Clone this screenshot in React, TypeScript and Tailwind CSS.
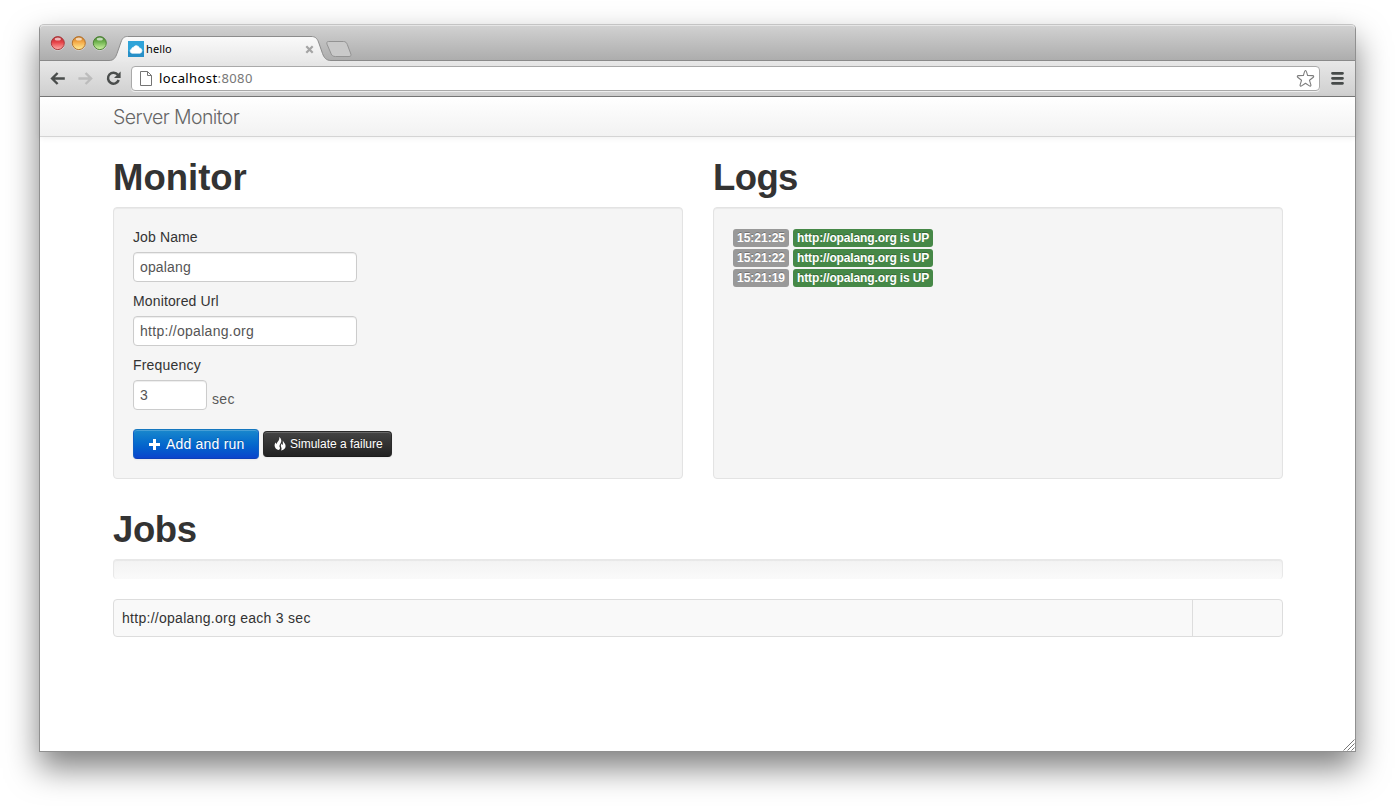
import React from "react";

function Light({ id, edge, top, mid, glow }: { id: string; edge: string; top: string; mid: string; glow: string }) {
  return (
    <svg width="15" height="16" viewBox="0 0 15 16" className="block">
      <defs>
        <linearGradient id={id} x1="0" y1="0" x2="0" y2="1">
          <stop offset="0" stopColor={top} />
          <stop offset="0.45" stopColor={mid} />
          <stop offset="1" stopColor={glow} />
        </linearGradient>
      </defs>
      <circle cx="7.8" cy="8.9" r="6.9" fill="#fff" opacity="0.45" />
      <circle cx="7.8" cy="8.1" r="6.5" fill={`url(#${id})`} stroke={edge} strokeWidth="1" />
      <ellipse cx="7.8" cy="4" rx="3.1" ry="1.6" fill="#fff" opacity="0.65" />
    </svg>
  );
}

function TabStrip() {
  return (
    <div className="flex h-[36px] items-start rounded-t-[4px] border-b border-[#8a8a8a] bg-linear-to-b from-[#d2d2d2] to-[#adadad] shadow-[inset_0_1px_0_#e6e6e6]">
      <div className="flex gap-[6px] pt-[10px] pl-[10px]">
        <Light id="red" edge="#a8393c" top="#b0242a" mid="#e8454a" glow="#ffb0aa" />
        <Light id="amber" edge="#b0702c" top="#c9751c" mid="#f5ad4c" glow="#fff09a" />
        <Light id="green" edge="#4d8136" top="#3d7d25" mid="#76b855" glow="#d2f5a6" />
      </div>
      <div className="relative ml-[2px] mt-[11px] h-[26px] w-[222px]">
        <svg width="222" height="26" viewBox="0 0 222 26" className="absolute inset-0">
          <defs>
            <linearGradient id="tab" x1="0" y1="0" x2="0" y2="1">
              <stop offset="0" stopColor="#fafafa" />
              <stop offset="1" stopColor="#e8e8e8" />
            </linearGradient>
          </defs>
          <path
            d="M0 24.5 C5 24.5 6.5 21.5 8 17.500 L12 6 C13.500 2 15 0.500 18.500 0.500 H202 C206 0.500 208 2 209.500 6 L213.500 17.500 C215 21.500 217 24.500 222 24.500 V26 H0 Z"
            fill="url(#tab)"
          />
          <path
            d="M0 24.5 C5 24.5 6.5 21.5 8 17.500 L12 6 C13.500 2 15 0.500 18.500 0.500 H202 C206 0.500 208 2 209.500 6 L213.500 17.500 C215 21.500 217 24.500 222 24.500"
            fill="none"
            stroke="#8c8c8c"
          />
        </svg>
        <div className="relative flex h-full items-center pl-[19px]">
          <svg width="16" height="16" viewBox="0 0 16 16">
            <rect width="16" height="16" fill="#2fa3d8" />
            <rect y="10" width="16" height="6" fill="#2790c8" />
            <path d="M4 12.300 A2.300 2.300 0 0 1 3.600 7.900 A2 2 0 0 1 5.500 6.300 A3.200 3.200 0 0 1 11.400 7 A2.700 2.700 0 0 1 12 12.300 Z" fill="#fff" stroke="#fff" strokeWidth="0.6" />
          </svg>
          <span className="ml-[2px] font-['Noto_Sans','Open_Sans',sans-serif] text-[11px] leading-4 tracking-[0.1px] text-black">hello</span>
          <svg width="9" height="9" viewBox="0 0 9 9" className="ml-auto mr-[17px]">
            <path d="M1.300 1.300 L7.700 7.700 M7.700 1.300 L1.300 7.700" stroke="#a4a4a4" strokeWidth="2.200" />
          </svg>
        </div>
      </div>
      <svg width="28" height="18" viewBox="0 0 28 18" className="ml-[-6px] mt-[16px]">
        <path
          d="M3.500 0.500 H18.500 C20.500 0.500 21.500 1.500 22.300 3.500 L25.500 12 C26.500 14.500 26 15.500 24 15.500 H10.500 C8 15.500 6.800 14.700 6 12.500 L2 3.200 C1.400 1.500 2 0.500 3.500 0.500 Z"
          fill="#c9c9c9"
          stroke="#939393"
        />
      </svg>
    </div>
  );
}

function Toolbar() {
  return (
    <div className="flex h-[36px] items-center border-b border-[#787878] bg-linear-to-b from-[#e8e8e8] to-[#cfcfcf] pb-px pl-[9px]">
      <svg width="16" height="14" viewBox="0 0 16 14">
        <path d="M8.600 2 L3.100 7.500 L8.600 13 M3.300 7.500 H15.800" fill="none" stroke="#4a4d4c" strokeWidth="2.400" />
      </svg>
      <svg width="16" height="14" viewBox="0 0 16 14" className="ml-[12px]">
        <path d="M8.600 2 L14.100 7.500 L8.600 13 M13.900 7.500 H1.400" fill="none" stroke="#bcbcbc" strokeWidth="2.400" />
      </svg>
      <svg width="16" height="16" viewBox="0 0 16 16" className="ml-[12px]">
        <path d="M12.900 4.800 A5.500 5.500 0 1 0 13.700 10" fill="none" stroke="#4a4d4c" strokeWidth="2.500" />
        <path d="M15.600 1.400 V8 H9 Z" fill="#4a4d4c" />
      </svg>
      <div className="ml-[10px] mt-px flex h-[25px] w-[1189px] items-center rounded-[4px] border border-[#a9a9a9] bg-white pb-px pl-[8px] pr-[4px] shadow-[0_1px_0_#eeeeee]">
        <svg width="12" height="16" viewBox="0 0 12 16">
          <path d="M0.500 1.500 H7.500 L11.500 5.500 V15.500 H0.500 Z M7.500 1.500 V5.500 H11.500" fill="#fff" stroke="#747474" />
        </svg>
        <span className="ml-[7px] font-['Noto_Sans','Open_Sans',sans-serif] text-[13px] leading-5 tracking-[0.4px] text-black">
          localhost<span className="text-[#777777]">:8080</span>
        </span>
        <svg width="19" height="19" viewBox="0 0 19 19" className="ml-auto">
          <path
            d="M9.500 1.500 C10.300 1.500 10.500 2.500 11.600 6.500 L16.500 6.600 C18 6.700 18 7.700 17 8.500 L13.500 11.300 L14.900 15.800 C15.200 17 14.300 17.500 13.400 16.900 L9.500 14.200 L5.600 16.900 C4.700 17.500 3.800 17 4.100 15.800 L5.500 11.300 L2 8.500 C1 7.700 1 6.700 2.500 6.600 L7.400 6.500 C8.500 2.500 8.700 1.500 9.500 1.500 Z"
            fill="#fff"
            stroke="#7d7d7d"
            strokeWidth="1.100"
            strokeLinejoin="round"
          />
        </svg>
      </div>
      <svg width="13" height="14" viewBox="0 0 13 14" className="ml-[11px]">
        <path d="M1.500 2.300 H11.500 M1.500 7.300 H11.500 M1.500 12.300 H11.500" stroke="#464a49" strokeWidth="2.800" strokeLinecap="round" />
      </svg>
    </div>
  );
}

const inputBase =
  "block h-[30px] rounded-[4px] border border-[#cccccc] bg-white px-[6px] text-[14px] leading-5 text-[#555555] shadow-[inset_0_1px_1px_rgba(0,0,0,0.075)] outline-none";

const well =
  "rounded-[4px] border border-[#e3e3e3] bg-[#f5f5f5] p-[19px] shadow-[inset_0_1px_1px_rgba(0,0,0,0.05)]";

const heading = "text-[36.5px] font-bold leading-10 text-[#333333]";

function MonitorForm() {
  return (
    <div className={`${well} mt-[9px] h-[272px]`}>
      <label className="mb-[5px] block tracking-[0.12px]">Job Name</label>
      <input className={`${inputBase} w-[224px] tracking-[0.15px]`} defaultValue="opalang" />
      <label className="mb-[5px] mt-[9px] block tracking-[0.14px]">Monitored Url</label>
      <input className={`${inputBase} w-[224px] tracking-[0.28px]`} defaultValue="http://opalang.org" />
      <label className="mb-[5px] mt-[9px] block tracking-[0.2px]">Frequency</label>
      <div className="flex">
        <input className={`${inputBase} w-[74px]`} defaultValue="3" />
        <span className="ml-[5px] mt-[9px] tracking-[0.3px] text-[#595959]">sec</span>
      </div>
      <div className="mt-[19px] flex items-center gap-[4px]">
        <button className="flex h-[30px] w-[126px] items-center rounded-[4px] border border-[#1260c4] border-t-[#1577bf] border-b-[#0d3fb8] bg-linear-to-b from-[#1a88cc] to-[#0c44cc] pl-[15px] text-white shadow-[inset_0_1px_0_rgba(255,255,255,0.2),0_1px_2px_rgba(0,0,0,0.05)] [text-shadow:0_-1px_0_rgba(0,0,0,0.25)]">
          <svg width="11" height="12" viewBox="0 0 11 12">
            <path d="M5.500 1 V12 M0 6.500 H11" stroke="#fff" strokeWidth="3" />
          </svg>
          <span className="ml-[6px] whitespace-nowrap tracking-[0.2px]">Add and run</span>
        </button>
        <button className="flex h-[26px] w-[129px] items-center rounded-[4px] border border-[#2a2a2a] border-b-[#1b1b1b] bg-linear-to-b from-[#444444] to-[#222222] pl-[10px] text-[12px] text-white shadow-[inset_0_1px_0_rgba(255,255,255,0.2),0_1px_2px_rgba(0,0,0,0.05)] [text-shadow:0_-1px_0_rgba(0,0,0,0.25)]">
          <svg width="12" height="14" viewBox="0 0 12 14">
            <path
              d="M5.200 0 C7.800 2 7.700 4.500 6.600 6.200 C5.400 8.200 5.100 9.300 5.900 10.600 C6.200 11.700 5.700 12.600 4.800 13.100 C2.300 12.600 0.600 10.800 0.600 8.600 C0.600 7.400 1 6.200 1.800 5.500 C1.900 6.400 2.100 6.900 2.500 7.200 C3 4.900 6 3.500 5.200 0 Z M8.900 3.400 C9.200 5.200 11.600 6.200 11.600 9 C11.600 11.400 9.700 13 7 13.500 C7.600 12.600 7.700 11.600 7.300 10.500 C6.600 8.800 6.800 7.600 7.500 6.600 C7.700 7.400 8 7.900 8.500 8.100 C9.300 6.500 8.500 5.200 8.900 3.400 Z"
              fill="#fff"
            />
          </svg>
          <span className="ml-[4px] whitespace-nowrap">Simulate a failure</span>
        </button>
      </div>
    </div>
  );
}

const logs = ["15:21:25", "15:21:22", "15:21:19"];

function Logs() {
  return (
    <div className={`${well} mt-[9px] h-[272px]`}>
      {logs.map((time) => (
        <div
          key={time}
          className="flex h-5 items-center gap-[4px] pt-[2px] text-[12px] font-bold leading-[18px] text-white [text-shadow:0_-1px_0_rgba(0,0,0,0.25)]"
        >
          <span className="h-[18px] w-[56px] rounded-[3px] bg-[#999999] text-center">{time}</span>
          <span className="h-[18px] w-[140px] whitespace-nowrap rounded-[3px] bg-[#468847] pl-[4px] tracking-[-0.13px]">http://opalang.org is UP</span>
        </div>
      ))}
    </div>
  );
}

export default function App() {
  return (
    <div className="h-[806px] w-[1395px] overflow-hidden bg-white px-[39px] pt-[24px] font-['Liberation_Sans',Arial,sans-serif] text-[14px] leading-5 text-[#333333]">
      <div className="relative flex h-[728px] w-[1317px] flex-col rounded-t-[5px] border border-[#909090] border-t-[#c4c4c4] bg-white shadow-[0_16px_32px_rgba(0,0,0,0.5)]">
        <TabStrip />
        <Toolbar />
        <div className="flex h-[40px] items-center border-b border-[#d4d4d4] bg-linear-to-b from-white to-[#f2f2f2] pl-[73px] shadow-[0_1px_6px_rgba(0,0,0,0.065)]">
          <span className="pt-px font-['Inter',sans-serif] text-[19.5px] font-light leading-5 tracking-[-0.6px] text-[#666666]">Server Monitor</span>
        </div>
        <main className="flex flex-col pr-[72px] pl-[73px] pt-[21px]">
          <div className="grid grid-cols-2 gap-[30px]">
            <section>
              <h1 className={heading}>Monitor</h1>
              <MonitorForm />
            </section>
            <section>
              <h1 className={`${heading} tracking-[-0.6px]`}>Logs</h1>
              <Logs />
            </section>
          </div>
          <section className="mt-[31px]">
            <h1 className={`${heading} tracking-[-0.4px]`}>Jobs</h1>
            <div className="mt-[9px] h-[20px] rounded-[4px] border border-b-0 border-[#e8e8e8] bg-linear-to-b from-[#f3f3f3] to-[#fafafa] shadow-[inset_0_1px_1px_rgba(0,0,0,0.05)]" />
            <div className="mt-[20px] flex h-[38px] items-center rounded-[4px] border border-[#dddddd] bg-[#f9f9f9]">
              <span className="flex-1 pl-[8px] tracking-[0.28px]">http://opalang.org each 3 sec</span>
              <span className="h-full w-[90px] border-l border-[#dddddd]" />
            </div>
          </section>
        </main>
        <svg width="12" height="12" viewBox="0 0 12 12" className="absolute bottom-0 right-0">
          <path d="M0.500 11.500 L11.500 0.500 M4.500 11.500 L11.500 4.500 M8.500 11.500 L11.500 8.500" stroke="#777777" strokeWidth="1" />
        </svg>
      </div>
    </div>
  );
}
